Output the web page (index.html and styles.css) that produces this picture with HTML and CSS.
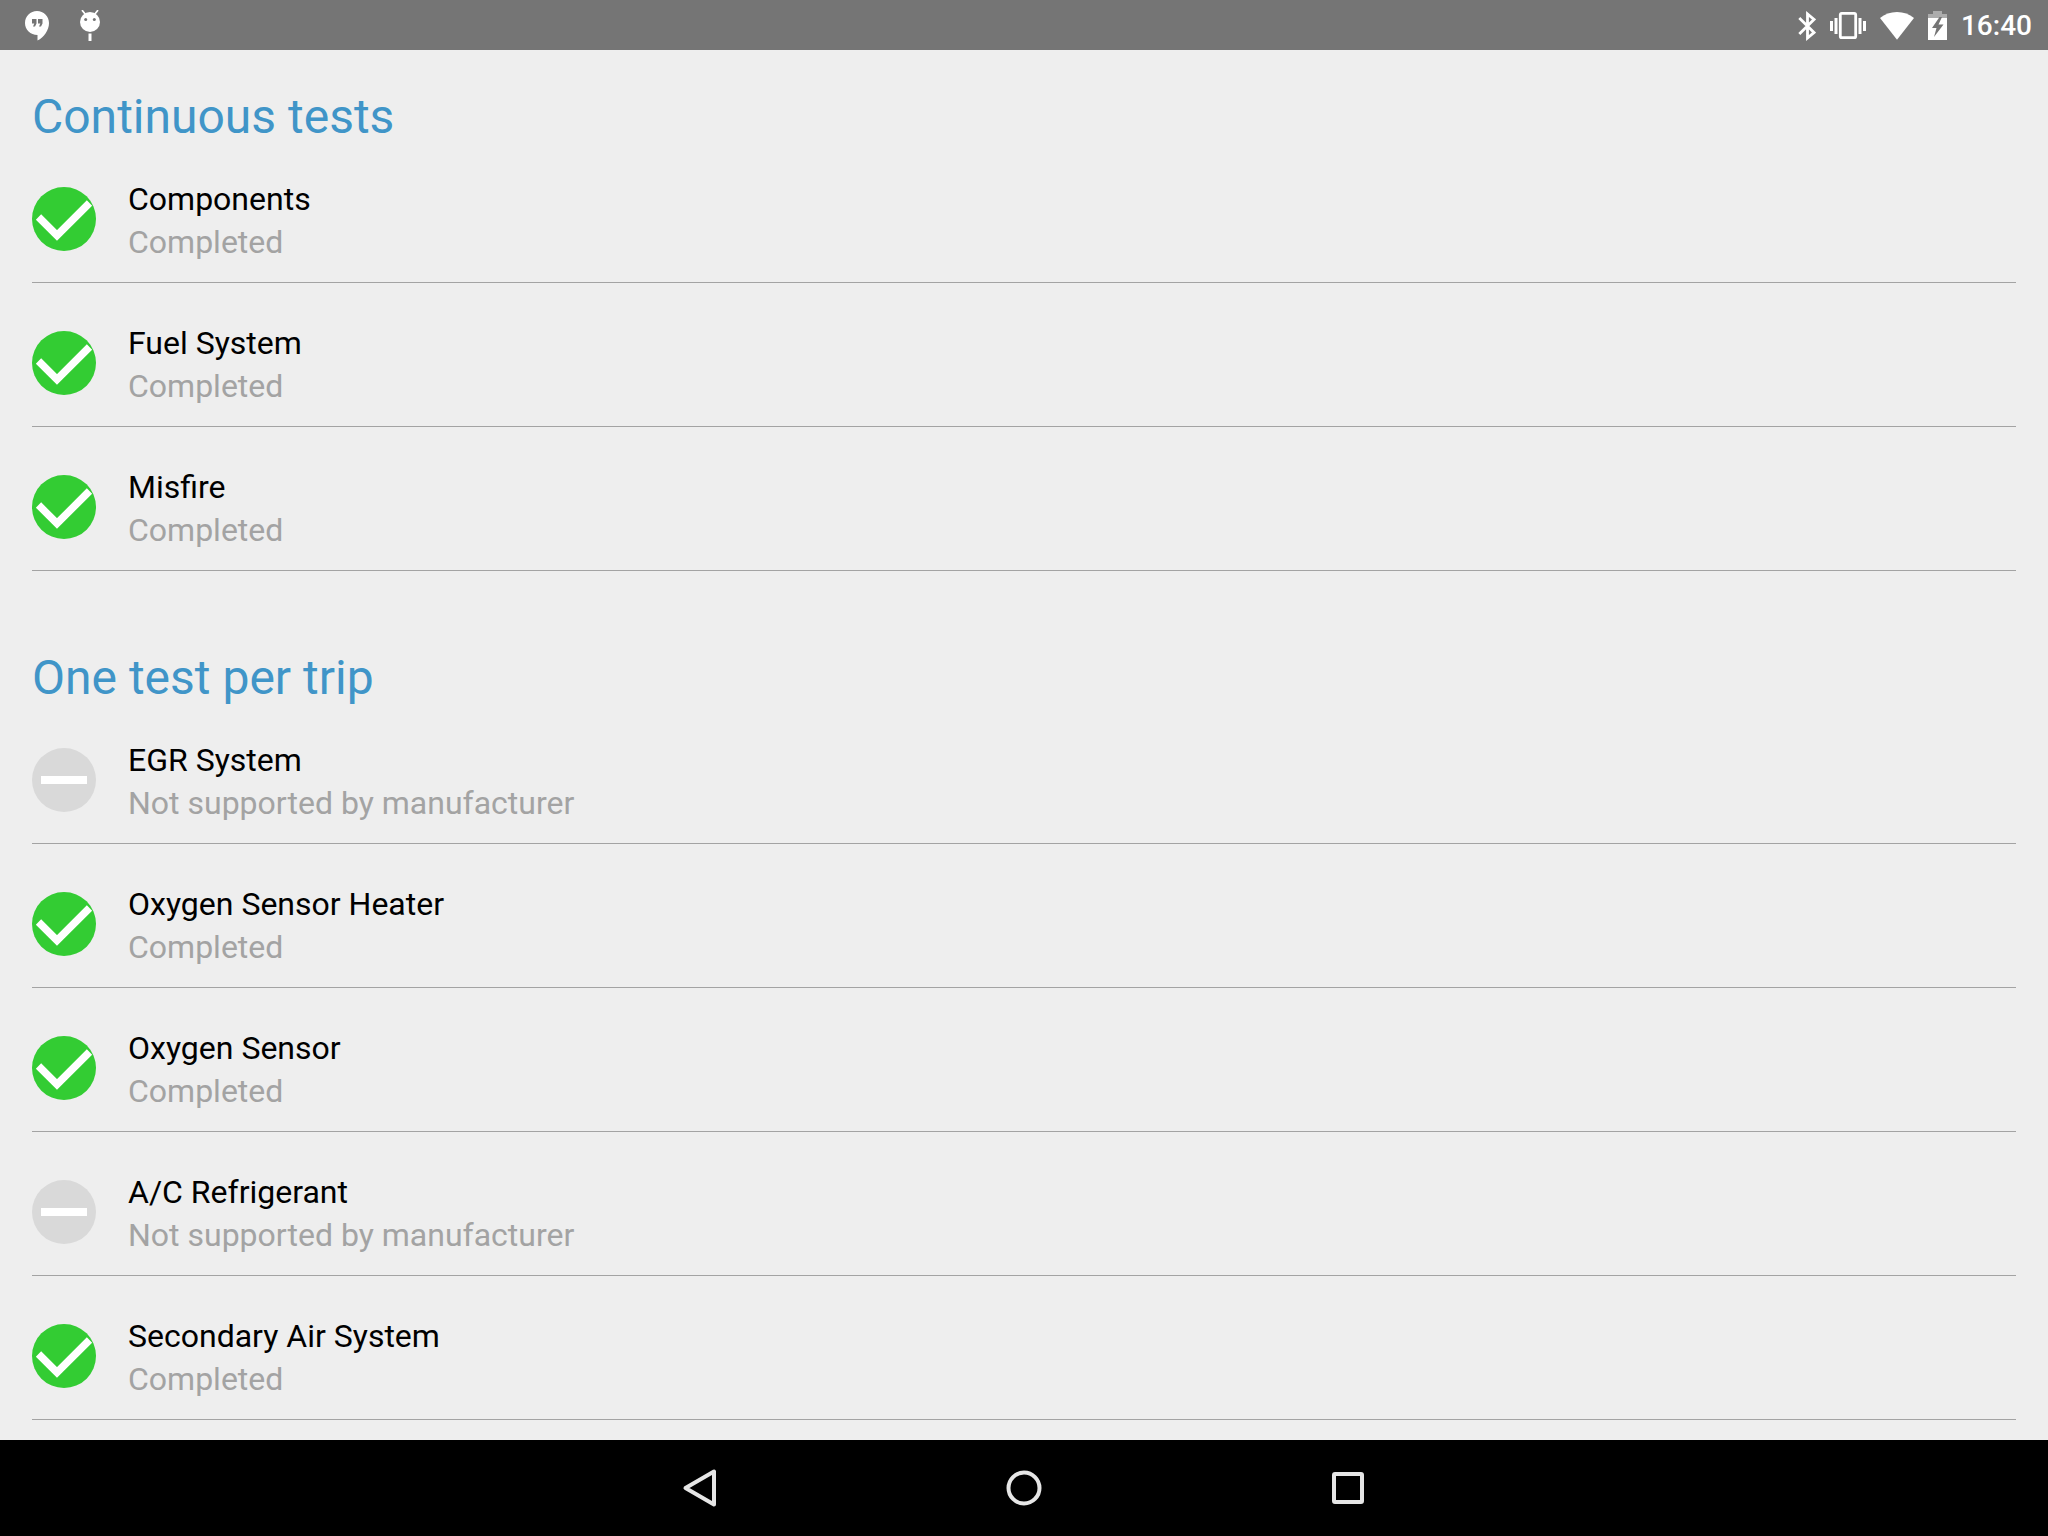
FILE: index.html
```html
<!DOCTYPE html>
<html lang="en">
<head>
    <meta charset="UTF-8">
    <meta name="viewport" content="width=device-width, initial-scale=1.0">
    <title>Readiness Tests</title>
    <link rel="stylesheet" href="styles.css">
</head>
<body>

<!-- Shared row icons -->
<svg class="sprite" aria-hidden="true">
    <symbol id="icon-done" viewBox="0 0 64 64">
        <circle cx="32" cy="32" r="32" fill="#33cc33"/>
        <path d="M6.5 30L25 48.500L57.500 16" fill="none" stroke="#fff" stroke-width="7.5"/>
    </symbol>
    <symbol id="icon-none" viewBox="0 0 64 64">
        <circle cx="32" cy="32" r="32" fill="#d9d9d9"/>
        <rect x="9" y="28" width="46" height="8" fill="#fff"/>
    </symbol>
</svg>

<!-- Status bar -->
<header class="status-bar">
    <div class="notifications">
        <svg width="24" height="30" viewBox="0 0 24 30">
            <path d="M12 0C5.4 0 0 5.4 0 12s5.4 12 12.5 12v5.500C19 26.5 24 19 24 12C24 5.4 18.6 0 12 0z" fill="#fff"/>
            <path d="M7 8h4.5v4.500L10 15.500H8L9.300 12.500H7zM13 8h4.500v4.500L16 15.500h-2l1.300-3H13z" fill="#757575"/>
        </svg>
        <svg width="20" height="32" viewBox="0 0 20 32">
            <path d="M2.5 0.800L5.500 4.500M17.500 0.800L14.500 4.500" stroke="#fff" stroke-width="1.8" stroke-linecap="round"/>
            <circle cx="10" cy="12" r="10" fill="#fff"/>
            <circle cx="5.7" cy="9.5" r="1.5" fill="#757575"/>
            <circle cx="14.3" cy="9.5" r="1.5" fill="#757575"/>
            <path d="M8.500 23.500h3V31h-3z" fill="#fff"/>
        </svg>
    </div>
    <div class="system">
        <svg width="18" height="30" viewBox="0 0 18 30">
            <path d="M1.300 7L16 21.500L9.500 27V3L16 8.500L1.300 23" fill="none" stroke="#fff" stroke-width="2.8"/>
        </svg>
        <svg width="36" height="30" viewBox="0 0 36 30">
            <rect x="10.3" y="2.3" width="15.4" height="24.4" rx="1.5" fill="none" stroke="#fff" stroke-width="2.8"/>
            <path d="M0 10h3v10H0zM4.500 7h3v16h-3zM28.500 7h3v16h-3zM33 10h3v10h-3z" fill="#fff"/>
        </svg>
        <svg width="34" height="30" viewBox="0 0 34 30">
            <path d="M17 28.800L0 7C4.500 3 10.500 1 17 1s12.500 2 17 6z" fill="#fff"/>
        </svg>
        <svg width="19" height="30" viewBox="0 0 19 30">
            <path d="M0 7V3h5V0h9v3h5v4z" fill="#acacac"/>
            <path d="M0 7h19v22H0z" fill="#fff"/>
            <path d="M11.500 6L4 17h4.500L6 26L15.500 13.500H10.500L14 6z" fill="#757575"/>
        </svg>
        <time class="clock" datetime="16:40">16:40</time>
    </div>
</header>

<main class="content">
    <section class="group">
        <h2>Continuous tests</h2>
        <ul class="tests">
            <li class="test">
                <svg class="icon"><use href="#icon-done"/></svg>
                <div><p class="name">Components</p><p class="state">Completed</p></div>
            </li>
            <li class="test">
                <svg class="icon"><use href="#icon-done"/></svg>
                <div><p class="name">Fuel System</p><p class="state">Completed</p></div>
            </li>
            <li class="test">
                <svg class="icon"><use href="#icon-done"/></svg>
                <div><p class="name">Misfire</p><p class="state">Completed</p></div>
            </li>
        </ul>
    </section>

    <section class="group">
        <h2>One test per trip</h2>
        <ul class="tests">
            <li class="test">
                <svg class="icon"><use href="#icon-none"/></svg>
                <div><p class="name">EGR System</p><p class="state">Not supported by manufacturer</p></div>
            </li>
            <li class="test">
                <svg class="icon"><use href="#icon-done"/></svg>
                <div><p class="name">Oxygen Sensor Heater</p><p class="state">Completed</p></div>
            </li>
            <li class="test">
                <svg class="icon"><use href="#icon-done"/></svg>
                <div><p class="name">Oxygen Sensor</p><p class="state">Completed</p></div>
            </li>
            <li class="test">
                <svg class="icon"><use href="#icon-none"/></svg>
                <div><p class="name">A/C Refrigerant</p><p class="state">Not supported by manufacturer</p></div>
            </li>
            <li class="test">
                <svg class="icon"><use href="#icon-done"/></svg>
                <div><p class="name">Secondary Air System</p><p class="state">Completed</p></div>
            </li>
        </ul>
    </section>
</main>

<!-- Navigation bar -->
<nav class="nav-bar">
    <button type="button" aria-label="Back">
        <svg width="40" height="40" viewBox="0 0 40 40">
            <path d="M34 3.500V36.500L5.500 20z"/>
        </svg>
    </button>
    <button type="button" aria-label="Home">
        <svg width="40" height="40" viewBox="0 0 40 40">
            <circle cx="20" cy="20" r="15.5"/>
        </svg>
    </button>
    <button type="button" aria-label="Recent apps">
        <svg width="40" height="40" viewBox="0 0 40 40">
            <rect x="6" y="6" width="28" height="28" rx="1"/>
        </svg>
    </button>
</nav>

</body>
</html>
```
FILE: styles.css
```css
* {
    box-sizing: border-box;
}
body {
    display: flex;
    flex-direction: column;
    height: 100vh;
    margin: 0;
    background-color: #eee;
    color: #000;
    font-family: Roboto, sans-serif;
}
svg {
    display: block;
    flex: none;
}
.sprite {
    display: none;
}

/* Status bar */
.status-bar {
    display: flex;
    flex: none;
    justify-content: space-between;
    align-items: center;
    height: 50px;
    padding: 2px 16px 0 25px;
    background-color: #757575;
}
.notifications {
    display: flex;
    align-items: center;
    gap: 31px;
}
.system {
    display: flex;
    align-items: center;
    gap: 14px;
}
.clock {
    color: #fff;
    font-size: 28px;
    font-weight: 500;
    line-height: 32px;
}

/* Test list */
.content {
    flex: 1;
    min-height: 0;
    overflow: hidden;
    padding: 0 32px;
}
.group {
    padding-top: 44px;
    margin-bottom: 40px;
}
h2 {
    margin: 0;
    color: #4095c8;
    font-size: 48px;
    font-weight: 400;
    line-height: 45px;
}
.tests {
    margin: 0;
    padding: 0;
    list-style: none;
}
.test {
    display: flex;
    align-items: flex-start;
    gap: 32px;
    padding: 39px 0 18px;
    border-bottom: 1px solid #a3a3a3;
}
.icon {
    width: 64px;
    height: 64px;
    margin-top: 9px;
}
.name, .state {
    margin: 0;
    font-size: 32px;
    line-height: 43px;
}
.state {
    color: #a3a3a3;
}

/* Navigation bar */
.nav-bar {
    display: flex;
    flex: none;
    justify-content: center;
    height: 96px;
    background-color: #000;
}
.nav-bar button {
    display: flex;
    justify-content: center;
    align-items: center;
    width: 324px;
    padding: 0;
    border: none;
    background: none;
    cursor: pointer;
}
.nav-bar svg {
    fill: none;
    stroke: #e6e6e6;
    stroke-width: 4px;
    stroke-linejoin: round;
}
```
